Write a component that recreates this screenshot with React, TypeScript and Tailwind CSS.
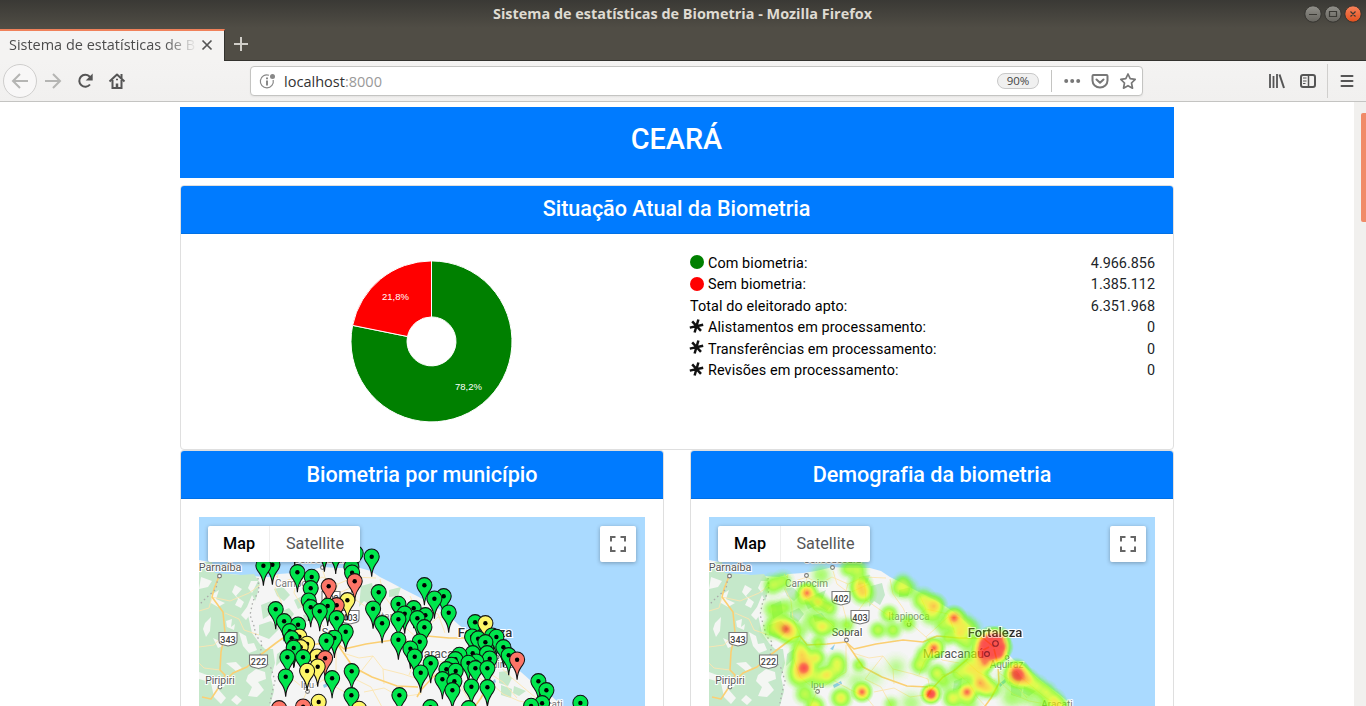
import React from "react";

type PinColor = "g" | "r" | "y";
type Pin = [number, number, PinColor?];

const PIN_FILL: Record<PinColor, string> = { g: "#00e64d", r: "#fd7567", y: "#fdf569" };

const PINS: Pin[] = [
  [95.3, 28], [125, 34.7], [136.3, 37], [156.3, 36.3], [172.3, 39.7], [73, 47.7], [64, 48.7], [152, 50],
  [98, 55.3], [152.7, 55.7], [112.3, 60], [155.3, 64.3, "r"], [129.3, 69.3, "r"], [111.3, 71.3],
  [179.3, 75.3], [148, 83.3, "y"], [109.3, 83.7], [137.3, 88.3, "r"], [128.3, 89], [111.3, 90.3],
  [173.7, 91.7], [76.3, 92.3], [120.3, 94.3], [137.3, 101.3], [84.7, 104.3], [182.7, 106.3],
  [98.7, 107.7], [90.3, 114.3], [146.3, 114.7], [100, 119.7, "y"], [92.3, 121.3], [135, 121],
  [127, 123.7], [107.7, 127, "y"], [94.7, 129.7], [101.3, 130.3, "y"], [94.3, 131], [117.7, 139.7, "y"],
  [88, 140.3], [103.7, 140.3], [125.7, 141.3, "r"], [118.3, 149.7, "y"], [107.7, 154, "y"],
  [152.3, 154.3], [86.3, 159.7], [132.7, 161.3], [152, 178.3], [119.3, 185, "y"], [103.7, 189.7, "r"],
  [79.7, 191.3, "r"], [159.7, 192, "y"], [200, 178.3],
  [225, 68.3], [244.3, 79.3], [235, 81.7], [199, 87], [214.3, 91.3], [249.3, 95.7], [205.3, 96.7],
  [226, 98.3], [218, 101.3], [199, 102.3], [225, 110.3], [199, 122.7], [220.3, 124.7], [211, 131.7],
  [215.3, 139.7], [231.3, 146.3], [221.3, 155.7],
  [275.7, 105.3], [286, 106.3, "y"], [292.7, 118.7], [272.7, 119.7], [297, 120], [278.7, 121.7],
  [286, 125.3], [304, 130.3], [273.3, 136.3], [287.7, 136.3], [260, 138], [309.3, 138.3],
  [290.3, 141.7], [256, 142.3], [317.7, 142.7, "r"], [277, 144.7], [269, 146], [252, 148],
  [276, 151.3], [288, 151.3], [247, 152.3], [256.3, 154], [243, 162.3], [255, 164.3],
  [272, 169.7], [288, 170.3], [253, 173.3], [231, 190.3], [269.3, 191.3],
  [339, 164.3], [347, 173.3], [342.7, 186.3], [331.7, 189], [381, 186],
];

/* x, y, weight, radius */
const HEAT: [number, number, number, number][] = [
  [64, 68, 0.32, 14], [74, 64, 0.25, 13], [98, 76, 0.85, 13], [109, 85, 0.5, 13], [120, 91, 0.35, 12],
  [151, 68, 0.52, 15], [154, 76, 0.55, 15], [139, 52, 0.28, 12], [149, 53, 0.32, 13], [112, 58, 0.16, 15],
  [190, 71, 0.3, 13], [198, 72, 0.3, 14], [194, 64, 0.2, 11], [214, 83, 0.44, 15], [225, 89, 0.65, 15], [222, 98, 0.28, 15],
  [63, 92, 0.24, 13], [75, 91, 0.24, 14], [92, 86, 0.18, 16],
  [77, 112, 0.9, 16], [68, 106, 0.35, 15], [83, 119, 0.28, 14], [62, 113, 0.22, 13],
  [113, 110, 0.48, 14], [104, 103, 0.24, 15], [123, 108, 0.2, 14], [92, 113, 0.14, 14],
  [169, 113, 0.32, 12], [184, 113, 0.3, 12], [180, 97, 0.42, 12], [199, 106, 0.28, 12], [138, 108, 0.24, 11],
  [109, 126, 0.28, 11], [93, 138, 0.58, 15], [91, 130, 0.24, 12], [95, 151, 1, 15], [92, 152, 0.3, 20], [90, 160, 0.34, 15],
  [107, 141, 0.48, 13], [118, 158, 0.52, 14], [107, 160, 0.32, 14], [128, 145, 0.38, 14], [129, 153, 0.27, 13],
  [150, 148, 0.27, 10], [153, 175, 0.9, 12], [96, 177, 0.32, 14], [132, 181, 0.5, 14], [106, 189, 0.48, 13],
  [187, 150, 0.1, 17], [182, 187, 0.2, 11], [148, 165, 0.1, 18], [202, 186, 0.12, 18], [165, 160, 0.07, 16],
  [225, 131, 0.9, 13], [216, 138, 0.38, 13], [211, 148, 0.37, 13], [228, 156, 0.38, 13], [235, 165, 0.22, 14],
  [222, 177, 1, 12], [222, 177, 0.8, 10], [245, 101, 0.9, 14], [255, 107, 0.32, 14], [234, 108, 0.27, 13],
  [250, 116, 0.5, 15], [262, 112, 0.26, 14], [238, 121, 0.26, 11], [258, 125, 0.28, 14],
  [276, 126, 1, 14], [289, 122, 1, 14], [292, 130, 1, 13], [274, 137, 1, 13], [283, 138, 1, 14], [284, 130, 1, 16],
  [282, 122, 1, 14], [290, 137, 0.9, 12], [276, 132, 1, 14], [276, 146, 0.75, 12],
  [266, 142, 0.26, 17], [261, 152, 0.42, 17], [250, 156, 0.3, 16], [270, 155, 0.36, 15],
  [271, 166, 0.7, 14], [277, 171, 0.46, 14], [284, 172, 0.28, 12], [258, 175, 0.9, 13], [244, 181, 0.45, 14], [259, 186, 0.2, 16],
  [309, 158, 1, 15], [307, 154, 0.7, 14], [312, 161, 0.4, 15], [319, 163, 0.5, 13], [328, 169, 0.36, 13], [337, 175, 0.36, 13],
  [345, 183, 0.42, 13], [350, 190, 0.45, 13], [298, 162, 0.15, 16], [303, 180, 0.16, 18], [320, 179, 0.14, 17], [335, 190, 0.18, 17],
];

const GREEN_PATCHES =
  "M0 45L13 45L16 56L30 57L42 58L55 57L61 66L57 82L49 98L53 116L60 126L66 132L74 132L76 146L72 160L75 174L70 192L0 192Z " +
  "M75 72L84 70L91 78L85 84L78 79Z M95 83L108 77L117 73L113 83L123 88L118 94L108 88L99 92Z M162 69L173 66L176 78L171 88L165 84L160 90Z M150 60L161 58L158 66L149 68Z " +
  "M190 73L202 70L199 79L190 80Z M62 88L72 84L74 96L64 102Z M81 95L90 91L95 97L89 105L81 100Z M60 108L72 104L80 112L70 122L60 118Z M104 98L113 96L117 102L106 105Z M78 137L85 132L84 142L77 149Z " +
  "M300 155L308 154L313 161L309 169L300 166Z M315 169L327 174L320 179L314 176Z M245 164L253 161L252 171L244 174Z M302 168L313 172L312 181L302 178Z";

const BARE_PATCHES =
  "M2 60L13 64L9 70L0 72Z M12 78L20 73L17 82L26 86L19 90L12 86Z M36 68L43 72L37 79L45 85L42 91L36 88L39 82L33 75Z M6 106L12 100L11 114L7 120L4 112Z " +
  "M53 78L48 90L42 98L47 103L53 95L57 85Z M14 121L23 125L29 121L26 128L19 131Z M40 115L47 119L49 127L55 126L58 133L50 136L44 129Z M27 146L37 145L43 151L37 154Z " +
  "M0 155L8 158L7 164L0 162Z M12 166L22 162L26 169L20 173L27 181L22 187L15 180Z M49 158L57 152L66 155L67 162L59 165L65 173L58 180L49 179L53 170L47 164Z M37 178L43 183L38 188L32 183Z M59 64L52 64L49 71L53 76Z M27 104L33 102L32 110L36 107L35 113L28 110Z";

const NARROW_ROADS =
  "M0 94L10 91L13 80L31 84L50 76L61 68 M26 96L40 102L45 113L60 118 M0 130L15 128L26 116 M21 153L5 151L0 146 M75 57L83 65L98 60L110 67L123 60L139 67L155 60L177 61 M79 57L76 72L82 84L84 102L92 121 M98 60L95 76L105 92L120 105L137 122 M139 67L133 86L137 101L137 122 M124 54L128 67L140 76L160 67 M155 61L157 83L147 97L137 122 M157 83L180 99L201 106L217 120 M201 106L194 91L184 77L181 62 M201 106L217 92L211 79 M217 92L239 97L246 116 M217 120L239 100L251 101 M92 121L84 139L91 160L108 174L124 163L137 155L137 128 M108 174L101 190 M124 163L140 172L158 181L166 191 M156 162L172 170L183 190 M144 136L160 141L174 139L184 152L185 167 M156 162L174 139 M184 152L204 157L219 162L222 177L201 180L185 171L165 175 M225 131L233 143L250 146 M217 120L225 131L215 145L210 158 M232 158L247 155L260 166L268 180L278 191 M257 144L269 155L286 164 M286 142L299 148L313 161L337 181L352 189 M291 165L304 177L320 184L337 187 M299 148L290 156L304 165L318 181";
const MAIN_ROADS =
  "M20 59L15 72L13 80L24 95L26 116L22 135L21 153L26 158L20 170L12 182L3 180 M20 170L34 156L48 150L60 139L77 126L84 121L91 119L98 128L118 127L137 125L145 132L167 127L194 123L214 125L228 119L250 121L274 121L285 130 M137 125L154 150L173 160L198 169L219 170 M218 180L222 173L234 160L246 153L261 140L280 130 M285 132L289 148L290 166L282 181L274 192";

function Label({ x, y, size, children, weight = 400, fill = "#555" }: { x: number; y: number; size: number; children: string; weight?: number; fill?: string }) {
  return (
    <text x={x} y={y} fontSize={size} fontWeight={weight} textAnchor="middle" fill={fill} stroke="#fff" strokeWidth="2" paintOrder="stroke" fontFamily="Roboto, sans-serif">
      {children}
    </text>
  );
}

function Shield({ x, y, n }: { x: number; y: number; n: string }) {
  return (
    <g>
      <path d={`M${x - 9} ${y - 6.5}h18v8q0 4-5 4.500l-4 1l-4-1q-5-.5-5-4.500z`} fill="#fff" stroke="#777" strokeWidth="1.1" />
      <text x={x} y={y + 3.5} fontSize="9" fontWeight="500" textAnchor="middle" fill="#444" fontFamily="Roboto, sans-serif">{n}</text>
    </g>
  );
}

function BaseMap() {
  return (
    <g>
      <rect width="446" height="190" fill="#aadaff" />
      <path d="M0 43L10 45L14 55L20 60L31 57L51 59L70 60L80 57L94 56L107 54L124 50L138 51L161 51L172 54L181 60L191 65L204 72L218 79L231 86L242 93L251 100L260 108L268 114L281 115L294 118L298 136L305 143L314 148L331 163L351 178L366 191L0 191Z" fill="#f5f5f5" />
      <path d={GREEN_PATCHES} fill="#c5e8ca" />
      <path d={BARE_PATCHES} fill="#f4f6f3" />
      <path d="M124 168l8-4 1 3-8 4z M290 167l6-5 1 3-6 5z M121 132l5-5-2 6z" fill="#8fcbe8" />
      <path d={NARROW_ROADS} fill="none" stroke="#fce5b0" strokeWidth="0.9" />
      <path d={MAIN_ROADS} fill="none" stroke="#fbcf73" strokeWidth="1.6" strokeLinejoin="round" />
      <path d="M19 60L17 72L7 81L0 88 M59 61L60 74L54 84L51 98L55 109L57 119L63 125L61 139L72 151L76 164L73 176L70 191" fill="none" stroke="#aaa" strokeWidth="1.3" strokeDasharray="1.5 3" />
    </g>
  );
}

function Places() {
  const spots: [number, number][] = [[20.5, 59], [21, 170], [97.5, 58.5], [123.5, 50.5], [137.5, 123], [200, 107.500], [108.5, 174.500], [298, 140.500]];
  return (
    <g>
      {spots.map(([x, y]) => <circle key={`${x}-${y}`} cx={x} cy={y} r="1.9" fill="#fff" stroke="#777" strokeWidth="1.1" />)}
      <Label x={21} y={54} size={10.8}>Parnaíba</Label>
      <Label x={21} y={167} size={10.3}>Piripiri</Label>
      <Label x={97.5} y={69.500} size={10} fill="#777">Camocim</Label>
      <Label x={124} y={46} size={9.8} fill="#777">Jericoacoara</Label>
      <Label x={138} y={118.500} size={10.8} fill="#444">Sobral</Label>
      <Label x={200} y={103} size={10} fill="#888">Itapipoca</Label>
      <Label x={108.5} y={171} size={9.8} fill="#777">Ipu</Label>
      <Label x={244.5} y={141} size={12.200} fill="#555">Maracanaú</Label>
      <Label x={286} y={120} size={13} weight={500} fill="#333">Fortaleza</Label>
      <Label x={297.5} y={151} size={10} fill="#777">Aquiraz</Label>
      <Label x={348} y={190.500} size={10} fill="#777">Aracati</Label>
      <Shield x={132} y={81} n="402" />
      <Shield x={151} y={100} n="403" />
      <Shield x={29} y={122} n="343" />
      <Shield x={59.5} y={144.500} n="222" />
    </g>
  );
}

function PinMap() {
  const pins = [...PINS].sort((a, b) => a[1] - b[1]);
  return (
    <svg className="block" width="446" height="189" viewBox="0 0 446 189">
      <BaseMap />
      <Places />
      {pins.map(([x, y, c], i) => (
        <g key={i} transform={`translate(${x + 0.4} ${y})`}>
          <path d="M0 20C-.3 14-1.600 10.800-4 7.400C-6 5-7.500 2.800-7.500-.2A7.500 7.500 0 0 1 7.500-.2C7.500 2.800 6 5 4 7.400C1.600 10.800 .3 14 0 20Z" fill={PIN_FILL[c ?? "g"]} stroke="#111" strokeWidth="1.050" />
          <circle r="2.200" fill="#000" />
        </g>
      ))}
    </svg>
  );
}

function HeatMap() {
  return (
    <svg className="block" width="446" height="189" viewBox="0 0 446 189">
      <defs>
        <radialGradient id="spot">
          <stop offset="0" stopOpacity="1" />
          <stop offset=".25" stopOpacity=".78" />
          <stop offset=".5" stopOpacity=".4" />
          <stop offset=".75" stopOpacity=".12" />
          <stop offset="1" stopOpacity="0" />
        </radialGradient>
        <filter id="ramp" x="0" y="0" width="446" height="189" filterUnits="userSpaceOnUse" colorInterpolationFilters="sRGB">
          <feColorMatrix values="0 0 0 1 0  0 0 0 1 0  0 0 0 0 0  0 0 0 1 0" />
          <feComponentTransfer>
            <feFuncR type="table" tableValues=".4 .4 .48 .64 .84 .96 .98 1 1 1 1" />
            <feFuncG type="table" tableValues="1 1 1 1 1 .9 .8 .65 .35 .12 0" />
            <feFuncB type="table" tableValues="0 0 0 0 0 0 0 0 .05 .12 .15" />
            <feFuncA type="table" tableValues="0 .6 1 1 1 1 1 1 1 1 1" />
          </feComponentTransfer>
        </filter>
      </defs>
      <BaseMap />
      <Places />
      <g opacity=".68">
        <g filter="url(#ramp)">
          {HEAT.map(([x, y, w, r], i) => <circle key={i} cx={x} cy={y} r={r} fill="url(#spot)" fillOpacity={w} />)}
        </g>
      </g>
      <g opacity=".55"><Label x={286} y={120} size={13} weight={500} fill="#222">Fortaleza</Label></g>
      <g fill="none" stroke="#8b1f2a" strokeWidth="1.1"><circle cx="286.500" cy="126.500" r="2.800" /><circle cx="278" cy="137" r="2.400" /></g>
    </svg>
  );
}

function MapCard({ title, satelliteOffset, children }: { title: string; satelliteOffset?: boolean; children: React.ReactNode }) {
  return (
    <section className="flex h-[260px] w-[484px] flex-col rounded-t border border-b-0 border-[#dfdfdf]">
      <h2 className="h-[48px] rounded-t-[3px] border-b border-[#0070e5] bg-[#007bff] text-center text-[21.6px] leading-[47px] font-medium tracking-[-0.03px] text-white">{title}</h2>
      <div className="px-[18px] pt-[18px]">
        <div className="relative">
          {children}
          <div className="absolute top-[9px] left-[9px] flex h-9 w-[152px] rounded-xs bg-white text-[16.2px] leading-[35px] shadow-[0_1px_4px_rgba(0,0,0,0.3)]">
            <span className={satelliteOffset ? "w-[63px] border-r border-[#eee] pl-0.5 text-center font-medium text-black" : "w-[62px] border-r border-[#eee] pl-px text-center font-medium text-black"}>Map</span>
            <span className="flex-1 text-center text-[#565656]">Satellite</span>
          </div>
          <div className="absolute top-[9px] right-[9px] flex size-9 items-center justify-center rounded-xs bg-white shadow-[0_1px_4px_rgba(0,0,0,0.3)]">
            <svg width="16" height="16" viewBox="0 0 16 16" fill="none" stroke="#666" strokeWidth="2"><path d="M1 5.500V1h4.500M10.500 1H15v4.500M15 10.500V15h-4.500M5.500 15H1v-4.500" /></svg>
          </div>
        </div>
      </div>
    </section>
  );
}

const ROWS: [string, string, string][] = [
  ["green", "Com biometria:", "4.966.856"],
  ["red", "Sem biometria:", "1.385.112"],
  ["", "Total do eleitorado apto:", "6.351.968"],
  ["star", "Alistamentos em processamento:", "0"],
  ["star", "Transferências em processamento:", "0"],
  ["star", "Revisões em processamento:", "0"],
];

function RowMark({ kind }: { kind: string }) {
  if (kind === "") return null;
  if (kind === "star")
    return (
      <svg className="-mt-1 mr-1 -ml-px" width="15" height="16" viewBox="0 0 15 16" stroke="#111" strokeWidth="2.500">
        <path d="M9.400 1.500L5.600 14.500M.8 9.600L14.200 6.700M3.200 3.300L12 12.800" />
      </svg>
    );
  return <span className={kind === "green" ? "mr-1 size-3.5 -translate-y-px rounded-full bg-[#008000]" : "mr-1 size-3.5 -translate-y-px rounded-full bg-[#ff0000]"} />;
}

function WindowBar() {
  return (
    <header className="flex h-[61px] flex-col border-b border-[#33322e] bg-[linear-gradient(#3a3935,#504d45_28px,#504d45)] font-['Open_Sans','Noto_Sans',sans-serif]">
      <div className="relative flex h-7 items-center justify-center">
        <svg className="-ml-px block overflow-visible" width="380" height="28">
          <text x="0" y="18.500" fontSize="13.300" fontWeight="700" textLength="379" lengthAdjust="spacingAndGlyphs" fill="#dfdbd2">Sistema de estatísticas de Biometria - Mozilla Firefox</text>
        </svg>
        <svg className="absolute top-[5px] right-[4px]" width="58" height="19" viewBox="0 0 58 19">
          <defs>
            <linearGradient id="gray" x2="0" y2="1"><stop stopColor="#92918b" /><stop offset="1" stopColor="#66645e" /></linearGradient>
            <linearGradient id="orange" x2="0" y2="1"><stop stopColor="#f7835c" /><stop offset="1" stopColor="#e2501d" /></linearGradient>
          </defs>
          <g stroke="#34332f" strokeWidth="1"><circle cx="9" cy="9" r="8.200" fill="url(#gray)" /><circle cx="29" cy="9" r="8.200" fill="url(#gray)" /><circle cx="49" cy="9" r="8.200" fill="url(#orange)" /></g>
          <g fill="none" stroke="#3a3934" strokeWidth="1.200"><path d="M5 9.500h8M25.500 6.500h7v5h-7zM46.500 6.500l5 5M51.500 6.500l-5 5" /></g>
        </svg>
      </div>
      <div className="flex h-[33px] pt-px">
        <div className="flex h-8 w-[225px] items-center border-t-2 border-r border-t-[#f0815a] border-r-[#33322e] bg-[#f4f3f2] pl-[9px] shadow-[0_1px_0_#f4f3f2]">
          <svg width="188" height="28" className="mask-[linear-gradient(to_right,#000_155px,transparent_188px)]">
            <text x="0" y="17.500" fontSize="14.500" textLength="186" lengthAdjust="spacingAndGlyphs" fill="#4c4c4c">Sistema de estatísticas de B</text>
          </svg>
          <svg className="-mt-0.5 ml-[4px]" width="12" height="12" viewBox="0 0 12 12" stroke="#555" strokeWidth="1.700"><path d="M1.500 1.500l9 9M10.500 1.500l-9 9" /></svg>
        </div>
        <svg className="mt-2 ml-[9px]" width="14" height="14" stroke="#d0cec8" strokeWidth="2"><path d="M7 0v14M0 7h14" /></svg>
      </div>
    </header>
  );
}

function Toolbar() {
  return (
    <nav className="flex h-[41px] items-center border-b border-[#c4c4c2] bg-linear-to-b from-[#f4f3f2] to-[#f1f0ef] font-['Open_Sans','Noto_Sans',sans-serif]">
      <svg width="130" height="40" viewBox="0 0 130 40" fill="none">
        <circle cx="20" cy="20" r="16.500" fill="#f8f7f7" stroke="#cfcecd" />
        <path d="M28 20H13M20 13l-7 7 7 7M45 20h15M53 13l7 7-7 7" stroke="#b5b5b3" strokeWidth="2" />
        <path d="M90 23.500A6 6 0 1 1 89.500 15.500L91 17" stroke="#555" strokeWidth="2" />
        <path d="M92.700 12.500v7h-7z" fill="#555" />
        <path d="M109.500 20.500l7.500-7 7.500 7" stroke="#555" strokeWidth="2" strokeLinejoin="round" />
        <path d="M112.500 19v8h9V19M121.500 13v4" stroke="#555" strokeWidth="2" />
        <path d="M117 27.500v-5" stroke="#555" strokeWidth="2.500" /><path d="M116 18.500h2" stroke="#555" strokeWidth="1.500" />
      </svg>
      <div className="ml-[120px] flex h-[30px] w-[893px] items-center rounded-[4px] border border-[#c4c4c2] bg-white shadow-[0_1px_2px_rgba(0,0,0,0.06)]">
        <svg className="ml-[8px]" width="17" height="17" viewBox="0 0 17 17" fill="none" stroke="#888" strokeWidth="1.200"><path d="M10 2.200A6.500 6.500 0 1 0 14.200 7" /><path d="M8 7.500v5M8 4.500v1.700" strokeWidth="2" /><circle cx="13.500" cy="3.500" r="2.500" fill="#888" stroke="none" /></svg>
        <svg className="ml-[8px]" width="110" height="28"><text x="0" y="19.500" fontSize="14.800" textLength="98" lengthAdjust="spacingAndGlyphs" fill="#333">localhost<tspan fill="#999">:8000</tspan></text></svg>
        <span className="ml-auto h-[16px] w-[42px] rounded-full border border-[#c8c8c8] bg-[#f0f0f0] text-center text-[11.5px] leading-[14px] text-[#444]">90%</span>
        <span className="ml-3 h-[22px] w-px bg-[#c4c4c2]" />
        <svg className="ml-3" width="78" height="20" viewBox="0 0 78 20" fill="none" stroke="#777" strokeWidth="2">
          <g fill="#777" stroke="none"><circle cx="2.200" cy="10" r="2" /><circle cx="8.200" cy="10" r="2" /><circle cx="14.200" cy="10" r="2" /></g>
          <path d="M29.500 4h13q1 0 1 1v4.500a7.500 7 0 0 1-15 0V5q0-1 1-1zM32.500 8.500l3.500 3.300 3.500-3.300" strokeLinecap="round" strokeLinejoin="round" />
          <path d="M64 3l2.200 4.700 5 .7-3.700 3.600 1 5.200-4.500-2.500-4.500 2.500 1-5.200-3.700-3.600 5-.7z" strokeWidth="1.700" strokeLinejoin="round" />
        </svg>
      </div>
      <svg className="ml-auto" width="100" height="40" viewBox="0 0 100 40" fill="none" stroke="#555" strokeWidth="2">
        <path d="M4 13v14M7.500 15v12M11 13v14" strokeWidth="1.800" /><path d="M13.500 13.500L18 27" />
        <rect x="35" y="14" width="14" height="12" rx="2" /><path d="M42.500 14v12" strokeWidth="1.500" /><path d="M37 17h3.500M37 20h3.500M37 22.500h2.500" strokeWidth="1" />
        <path d="M61.500 3v34" stroke="#d0cfcd" strokeWidth="1" />
        <path d="M75.500 15h11M75.500 20h11M75.500 25h11" strokeLinecap="round" />
      </svg>
    </nav>
  );
}

export default function App() {
  return (
    <div className="flex h-[706px] w-[1366px] flex-col overflow-hidden bg-white font-[Roboto,sans-serif]">
      <WindowBar />
      <Toolbar />
      <div className="flex h-[604px] justify-between">
        <main className="ml-[180px] w-[994px] pt-[5px]">
          <h1 className="h-[71px] bg-[#007bff] pr-px text-center text-[28.8px] leading-[64px] font-medium text-white">CEARÁ</h1>
          <section className="mt-[7px] h-[265px] rounded border border-[#dfdfdf]">
            <h2 className="h-[48px] rounded-t-[3px] border-b border-[#0070e5] bg-[#007bff] pr-px text-center text-[21.6px] leading-[46px] font-medium tracking-[-0.04px] text-white">Situação Atual da Biometria</h2>
            <div className="flex justify-between pr-[18px]">
              <svg className="mt-[26px] ml-[169px]" width="164" height="164" viewBox="-81.500 -81.400 164 164">
                <g stroke="#fff" strokeWidth="1">
                  <path d="M0-80.500A80.500 80.500 0 1 1-78.900-16L-24-4.900A24.500 24.500 0 1 0 0-24.500Z" fill="#008000" />
                  <path d="M0-80.500A80.500 80.500 0 0 0-78.900-16L-24-4.900A24.500 24.500 0 0 1 0-24.500Z" fill="#ff0000" />
                </g>
                <g fill="#fff" fontSize="9.500" textAnchor="middle" fontFamily="'Liberation Sans', sans-serif"><text x="-36" y="-41.500" textLength="27">21,8%</text><text x="37" y="48.500" textLength="27">78,2%</text></g>
              </svg>
              <ul className="w-[465px] pt-[18.6px] text-[14.4px] leading-[21.5px] text-[#212529]">
                {ROWS.map(([kind, label, value]) => (
                  <li key={label} className="flex h-[21.5px] items-center">
                    <RowMark kind={kind} />
                    <span className="tracking-[0.09px] text-black">{label}</span>
                    <span className="ml-auto">{value}</span>
                  </li>
                ))}
              </ul>
            </div>
          </section>
          <div className="flex justify-between">
            <MapCard title="Biometria por município"><PinMap /></MapCard>
            <MapCard title="Demografia da biometria" satelliteOffset><HeatMap /></MapCard>
          </div>
        </main>
        <div className="flex w-3 justify-end bg-[#f1f0ee] pt-[11px]">
          <div className="h-[109px] w-[5px] rounded-l-xs bg-[#f08b68]" />
        </div>
      </div>
    </div>
  );
}
